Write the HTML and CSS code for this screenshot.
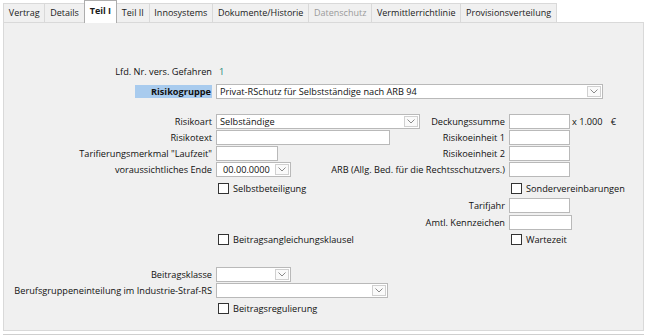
FILE: index.html
```html
<!DOCTYPE html>
<html lang="de">
<head>
<meta charset="utf-8">
<title>Teil I</title>
<link rel="stylesheet" href="styles.css">
</head>
<body>
<div class="tabs">
  <div class="tab">Vertrag</div>
  <div class="tab">Details</div>
  <div class="tab active">Teil I</div>
  <div class="tab">Teil II</div>
  <div class="tab">Innosystems</div>
  <div class="tab">Dokumente/Historie</div>
  <div class="tab disabled">Datenschutz</div>
  <div class="tab">Vermittlerrichtlinie</div>
  <div class="tab">Provisionsverteilung</div>
</div>
<div class="panel">
  <div class="form">
    <div class="r r-lfd">
      <div class="lbl">Lfd. Nr. vers. Gefahren</div>
      <div class="val">1</div>
    </div>
    <div class="r r-grp">
      <div class="lbl"><span class="hl">Risikogruppe</span></div>
      <div class="sel w-grp"><span class="txt">Privat-RSchutz für Selbstständige nach ARB 94</span><span class="btn"><svg viewBox="0 0 8 5" width="8" height="5"><path d="M0.5 0.5 L4 4 L7.5 0.5" fill="none" stroke="#8a8a8a" stroke-width="1"/></svg></span></div>
    </div>
    <div class="r r-first">
      <div class="lbl">Risikoart</div>
      <div class="mid">
        <div class="sel w-art"><span class="txt">Selbständige</span><span class="btn"><svg viewBox="0 0 8 5" width="8" height="5"><path d="M0.5 0.5 L4 4 L7.5 0.5" fill="none" stroke="#8a8a8a" stroke-width="1"/></svg></span></div>
        <div class="rl">Deckungssumme</div>
      </div>
      <div class="in w-r"></div>
      <div class="unit">x 1.000</div>
      <div class="eur">€</div>
    </div>
    <div class="r">
      <div class="lbl">Risikotext</div>
      <div class="mid">
        <div class="in w-text"></div>
        <div class="rl">Risikoeinheit 1</div>
      </div>
      <div class="in w-r"></div>
    </div>
    <div class="r">
      <div class="lbl">Tarifierungsmerkmal "Laufzeit"</div>
      <div class="mid">
        <div class="in w-lauf"></div>
        <div class="rl">Risikoeinheit 2</div>
      </div>
      <div class="in w-r"></div>
    </div>
    <div class="r r-tall">
      <div class="lbl">voraussichtliches Ende</div>
      <div class="mid">
        <div class="sel w-date"><span class="txt date">00.00.0000</span><span class="btn"><svg viewBox="0 0 8 5" width="8" height="5"><path d="M0.5 0.5 L4 4 L7.5 0.5" fill="none" stroke="#8a8a8a" stroke-width="1"/></svg></span></div>
        <div class="rl">ARB (Allg. Bed. für die Rechtsschutzvers.)</div>
      </div>
      <div class="in w-r"></div>
    </div>
    <div class="r r-cb">
      <div class="lbl"></div>
      <div class="mid">
        <label class="cb"><span class="box"></span>Selbstbeteiligung</label>
      </div>
      <label class="cb cb-r"><span class="box"></span>Sondervereinbarungen</label>
    </div>
    <div class="r r-tall">
      <div class="lbl"></div>
      <div class="mid">
        <div class="rl">Tarifjahr</div>
      </div>
      <div class="in w-r"></div>
    </div>
    <div class="r">
      <div class="lbl"></div>
      <div class="mid">
        <div class="rl">Amtl. Kennzeichen</div>
      </div>
      <div class="in w-r2"></div>
    </div>
    <div class="r r-cb2">
      <div class="lbl"></div>
      <div class="mid">
        <label class="cb"><span class="box"></span>Beitragsangleichungsklausel</label>
      </div>
      <label class="cb cb-r"><span class="box"></span>Wartezeit</label>
    </div>
    <div class="r r-klasse">
      <div class="lbl">Beitragsklasse</div>
      <div class="sel w-date"><span class="txt"></span><span class="btn"><svg viewBox="0 0 8 5" width="8" height="5"><path d="M0.5 0.5 L4 4 L7.5 0.5" fill="none" stroke="#8a8a8a" stroke-width="1"/></svg></span></div>
    </div>
    <div class="r r-tall">
      <div class="lbl">Berufsgruppeneinteilung im Industrie-Straf-RS</div>
      <div class="sel w-beruf"><span class="txt"></span><span class="btn"><svg viewBox="0 0 8 5" width="8" height="5"><path d="M0.5 0.5 L4 4 L7.5 0.5" fill="none" stroke="#8a8a8a" stroke-width="1"/></svg></span></div>
    </div>
    <div class="r r-cb3">
      <div class="lbl"></div>
      <label class="cb"><span class="box"></span>Beitragsregulierung</label>
    </div>
  </div>
</div>
<div class="foot"></div>
</body>
</html>
```

FILE: styles.css
```css
html, body {
  margin: 0;
  padding: 0;
  background: #ffffff;
}
body {
  font-family: "Open Sans", "Noto Sans", sans-serif;
  font-size: 9.2px;
  color: #111111;
  width: 647px;
  height: 336px;
  overflow: hidden;
}
.tabs {
  display: flex;
  align-items: flex-end;
  height: 22px;
  padding-left: 3px;
  box-sizing: border-box;
  font-size: 9px;
}
.tab {
  height: 19px;
  box-sizing: border-box;
  padding: 0 4.8px;
  line-height: 18px;
  background: #f0f0f0;
  border: 1px solid #d9d9d9;
  border-bottom: none;
  border-left: none;
  white-space: nowrap;
  color: #1a1a1a;
}
.tab:first-child {
  border-left: 1px solid #d9d9d9;
}
.tab.active {
  height: 23px;
  line-height: 20px;
  margin-bottom: -1px;
  margin-left: -1px;
  background: #ffffff;
  border: 1px solid #adadad;
  border-bottom: none;
  font-weight: 700;
  position: relative;
  z-index: 1;
  padding: 0 5px;
}
.tab.disabled {
  color: #9a9a9a;
}
.panel {
  margin-left: 3px;
  width: 641px;
  height: 309px;
  box-sizing: border-box;
  background: #f0f0f0;
  border: 1px solid #d9d9d9;
}
.foot {
  margin-left: 3px;
  width: 641px;
  height: 1px;
  margin-top: 3px;
  background: #cfcfcf;
}
.form {
  display: flex;
  flex-direction: column;
  padding-top: 41px;
}
.r {
  display: flex;
  align-items: center;
  height: 16px;
  white-space: nowrap;
}
.r-lfd { height: 15px; }
.r-grp { margin-top: 4px; height: 16px; }
.r-first { margin-top: 14px; }
.r-tall { height: 17px; }
.r-cb { height: 18px; margin-top: 1px; }
.r-cb2 { height: 17px; margin-top: 1px; }
.r-klasse { margin-top: 18px; }
.r-cb3 { height: 17px; margin-top: 1px; }
.lbl {
  width: 208px;
  flex: none;
  text-align: right;
  margin-right: 4px;
}
.hl {
  display: inline-block;
  width: 76px;
  padding-right: 1px;
  height: 13px;
  line-height: 13px;
  background: #a8cbee;
  font-weight: 700;
  text-align: right;
}
.val {
  color: #1f8a78;
  margin-left: 3px;
}
.mid {
  width: 289px;
  flex: none;
  display: flex;
  align-items: center;
  margin-right: 4px;
}
.rl {
  margin-left: auto;
  text-align: right;
}
.in, .sel {
  height: 15px;
  box-sizing: border-box;
  background: #ffffff;
  border: 1px solid #b9b9b9;
  flex: none;
}
.sel {
  display: flex;
  align-items: center;
  justify-content: space-between;
}
.sel .txt {
  padding-left: 3px;
  line-height: 13px;
}
.sel .txt.date {
  padding-left: 6px;
}
.btn {
  width: 14px;
  height: 11px;
  margin-right: 1px;
  box-sizing: border-box;
  border: 1px solid #d0d0d0;
  background: #fafafa;
  display: flex;
  align-items: center;
  justify-content: center;
}
.w-grp { width: 387px; }
.w-art { width: 204px; }
.w-text { width: 174px; }
.w-lauf { width: 62px; }
.w-date { width: 75px; }
.w-beruf { width: 172px; }
.w-r { width: 61px; }
.w-r2 { width: 63px; }
.unit {
  margin-left: 2px;
}
.eur {
  margin-left: 8px;
}
.cb {
  display: flex;
  align-items: center;
  margin-left: 2px;
}
.cb-r {
  margin-left: 2px;
}
.box {
  width: 11px;
  height: 11px;
  box-sizing: border-box;
  border: 1px solid #333333;
  background: #ffffff;
  margin-right: 4px;
  flex: none;
}
```
